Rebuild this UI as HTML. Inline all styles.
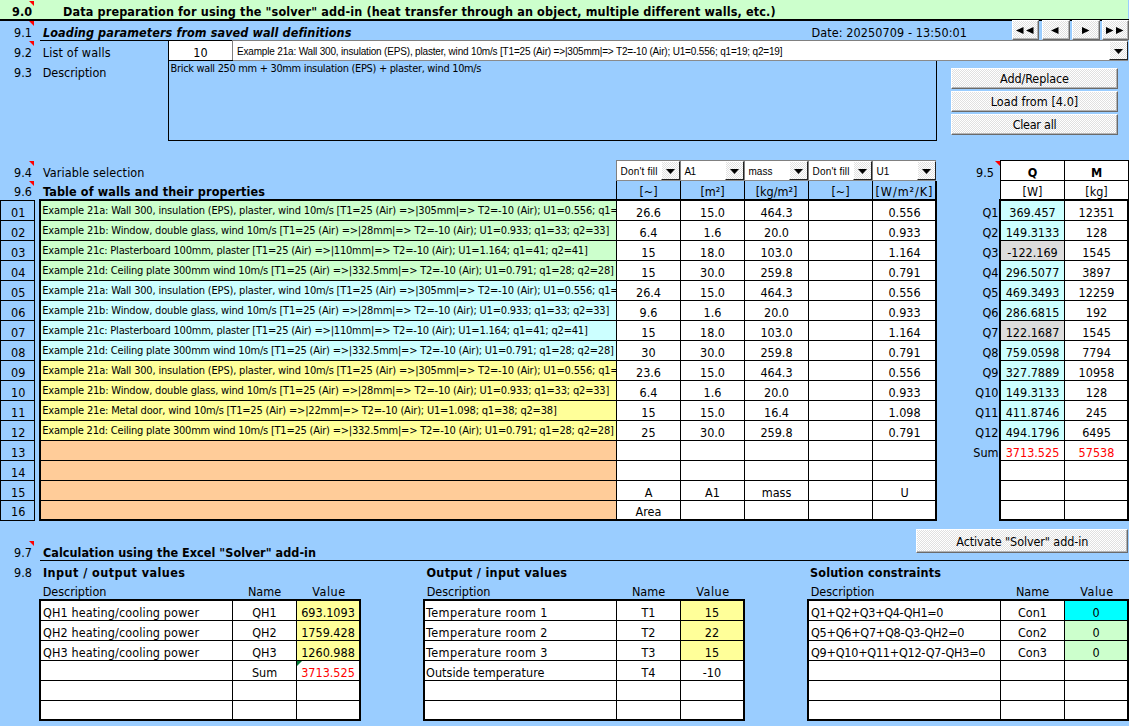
<!DOCTYPE html>
<html lang="en"><head><meta charset="utf-8"><title>Solver data preparation</title>
<style>
html,body{margin:0;padding:0}
body{width:1129px;height:726px;overflow:hidden;background:#9ACDFF;position:relative;font-family:"DejaVu Sans Condensed","Liberation Sans",sans-serif;}
div,span.t,svg{position:absolute;display:block}
.t{white-space:pre;line-height:20px;height:20px}
.clip{overflow:hidden;background:none}
.btn{background:#fff repeating-conic-gradient(#fff 0 25%,#e0e0e0 0 50%) 0 0/2px 2px;box-sizing:border-box;border-top:1px solid #fff;border-left:1px solid #fff;border-right:1px solid #6a6a6a;border-bottom:1px solid #6a6a6a;box-shadow:inset -1px -1px 0 #b4b4b4}
.cb{border-right-color:#222;border-bottom-color:#222;box-shadow:none}
.combo{background:#fff;box-sizing:border-box;border-top:1px solid #808080;border-left:1px solid #808080;border-right:0;border-bottom:1px solid #8a8a8a}
</style></head>
<body>
<div style="left:0px;top:0px;width:1128px;height:19px;background:#CCFFCC;"></div>
<div style="left:0px;top:19px;width:1129px;height:2px;background:#000;"></div>
<div style="left:40px;top:40px;width:193px;height:1px;background:#000;"></div>
<div style="left:40px;top:190px;width:1089px;height:0px;background:#000;"></div>
<div style="left:29px;top:1px;width:0;height:0;border-top:5px solid #FF0000;border-left:5px solid transparent;background:none"></div>
<div style="left:29px;top:21px;width:0;height:0;border-top:5px solid #FF0000;border-left:5px solid transparent;background:none"></div>
<div style="left:29px;top:41px;width:0;height:0;border-top:5px solid #FF0000;border-left:5px solid transparent;background:none"></div>
<div style="left:29px;top:161px;width:0;height:0;border-top:5px solid #FF0000;border-left:5px solid transparent;background:none"></div>
<div style="left:29px;top:181px;width:0;height:0;border-top:5px solid #FF0000;border-left:5px solid transparent;background:none"></div>
<div style="left:29px;top:541px;width:0;height:0;border-top:5px solid #FF0000;border-left:5px solid transparent;background:none"></div>
<div style="left:995px;top:161px;width:0;height:0;border-top:5px solid #FF0000;border-left:5px solid transparent;background:none"></div>
<span class="t " style="font-size:12.5px;color:#000;font-weight:bold;left:-268px;width:300px;text-align:right;top:1.68px;">9.0</span>
<span class="t " style="font-size:12.5px;color:#000;left:-268px;width:300px;text-align:right;top:22.68px;">9.1</span>
<span class="t " style="font-size:12.5px;color:#000;left:-268px;width:300px;text-align:right;top:42.67px;">9.2</span>
<span class="t " style="font-size:12.5px;color:#000;left:-268px;width:300px;text-align:right;top:62.67px;">9.3</span>
<span class="t " style="font-size:12.5px;color:#000;left:-268px;width:300px;text-align:right;top:162.68px;">9.4</span>
<span class="t " style="font-size:12.5px;color:#000;left:-268px;width:300px;text-align:right;top:181.68px;">9.6</span>
<span class="t " style="font-size:12.5px;color:#000;left:-268px;width:300px;text-align:right;top:542.67px;">9.7</span>
<span class="t " style="font-size:12.5px;color:#000;left:-268px;width:300px;text-align:right;top:562.67px;">9.8</span>
<span class="t " style="font-size:12.5px;color:#000;font-weight:bold;letter-spacing:0.142px;left:63px;top:1.68px;">Data preparation for using the "solver" add-in (heat transfer through an object, multiple different walls, etc.)</span>
<span class="t " style="font-size:12.5px;color:#000;font-weight:bold;font-style:italic;letter-spacing:0.094px;left:43px;top:22.68px;">Loading parameters from saved wall definitions</span>
<span class="t " style="font-size:12.5px;color:#000;letter-spacing:0.181px;left:42.7px;top:42.67px;">List of walls</span>
<span class="t " style="font-size:12.5px;color:#000;letter-spacing:-0.036px;left:42.7px;top:62.67px;">Description</span>
<span class="t " style="font-size:12.5px;color:#000;letter-spacing:0.114px;left:43px;top:162.68px;">Variable selection</span>
<span class="t " style="font-size:12.5px;color:#000;font-weight:bold;letter-spacing:0.120px;left:43px;top:181.68px;">Table of walls and their properties</span>
<span class="t " style="font-size:12.5px;color:#000;font-weight:bold;letter-spacing:0.044px;left:43px;top:542.67px;">Calculation using the Excel "Solver" add-in</span>
<span class="t " style="font-size:12.5px;color:#000;font-weight:bold;letter-spacing:0.444px;left:43px;top:562.67px;">Input / output values</span>
<span class="t " style="font-size:12.5px;color:#000;font-weight:bold;letter-spacing:0.294px;left:426.5px;top:562.67px;">Output / input values</span>
<span class="t " style="font-size:12.5px;color:#000;font-weight:bold;letter-spacing:0.152px;left:810px;top:562.67px;">Solution constraints</span>
<span class="t " style="font-size:12.5px;color:#000;letter-spacing:0.097px;left:811.5px;top:22.68px;">Date: 20250709 - 13:50:01</span>
<div class="btn" style="left:1012px;top:20px;width:27px;height:20px"></div>
<div class="btn" style="left:1042px;top:20px;width:28px;height:20px"></div>
<div class="btn" style="left:1072px;top:20px;width:28px;height:20px"></div>
<div class="btn" style="left:1102px;top:20px;width:27px;height:20px"></div>
<svg style="left:1015.6px;top:27px" width="8" height="7" viewBox="0 0 8 7"><polygon points="7.5,0 7.5,7 0,3.5" fill="#000"/></svg>
<svg style="left:1026.4px;top:27px" width="8" height="7" viewBox="0 0 8 7"><polygon points="7.5,0 7.5,7 0,3.5" fill="#000"/></svg>
<svg style="left:1050.7px;top:27px" width="8" height="7" viewBox="0 0 8 7"><polygon points="7.5,0 7.5,7 0,3.5" fill="#000"/></svg>
<svg style="left:1081.75px;top:27px" width="8" height="7" viewBox="0 0 8 7"><polygon points="0,0 0,7 7.5,3.5" fill="#000"/></svg>
<svg style="left:1106.1px;top:27px" width="8" height="7" viewBox="0 0 8 7"><polygon points="0,0 0,7 7.5,3.5" fill="#000"/></svg>
<svg style="left:1116.1px;top:27px" width="8" height="7" viewBox="0 0 8 7"><polygon points="0,0 0,7 7.5,3.5" fill="#000"/></svg>
<div style="left:169px;top:41px;width:63px;height:19px;background:#fff;"></div>
<span class="t " style="font-size:12.5px;color:#000;left:50.5px;width:300px;text-align:center;top:42.67px;">10</span>
<div class="combo" style="left:232px;top:40px;width:896px;height:21px"></div>
<div class="btn cb" style="left:1109px;top:41px;width:19px;height:19px"></div>
<svg style="left:1114px;top:49px" width="9" height="5" viewBox="0 0 9 5"><polygon points="0,0 9,0 4.5,5" fill="#000"/></svg>
<span class="t " style="font-size:10px;color:#000;font-family:'Liberation Sans',sans-serif;letter-spacing:-0.175px;left:237px;top:42.03px;">Example 21a: Wall 300, insulation (EPS), plaster, wind 10m/s [T1=25 (Air) =&gt;|305mm|=&gt; T2=-10 (Air); U1=0.556; q1=19; q2=19]</span>
<div style="left:168px;top:41px;width:1px;height:100px;background:#000;"></div>
<div style="left:168px;top:60px;width:65px;height:1px;background:#000;"></div>
<div style="left:168px;top:140px;width:769px;height:1px;background:#000;"></div>
<div style="left:936px;top:61px;width:1px;height:80px;background:#000;"></div>
<span class="t " style="font-size:10.9px;color:#000;letter-spacing:-0.280px;left:170.5px;top:59.23px;">Brick wall 250 mm + 30mm insulation (EPS) + plaster, wind 10m/s</span>
<div class="btn" style="left:951px;top:68px;width:167px;height:21px"></div>
<span class="t " style="font-size:12.5px;color:#000;letter-spacing:-0.098px;left:884.5px;width:300px;text-align:center;top:68.67px;">Add/Replace</span>
<div class="btn" style="left:951px;top:91px;width:167px;height:21px"></div>
<span class="t " style="font-size:12.5px;color:#000;letter-spacing:0.044px;left:884.5px;width:300px;text-align:center;top:91.67px;">Load from [4.0]</span>
<div class="btn" style="left:951px;top:114px;width:167px;height:21px"></div>
<span class="t " style="font-size:12.5px;color:#000;letter-spacing:-0.266px;left:884.5px;width:300px;text-align:center;top:114.67px;">Clear all</span>
<div class="btn" style="left:916px;top:529px;width:212px;height:24px"></div>
<span class="t " style="font-size:12.5px;color:#000;letter-spacing:-0.103px;left:872.3px;width:300px;text-align:center;top:532.17px;">Activate "Solver" add-in</span>
<span class="t " style="font-size:12.5px;color:#000;left:-131.8px;width:300px;text-align:center;top:202.68px;">01</span>
<span class="t " style="font-size:12.5px;color:#000;left:-131.8px;width:300px;text-align:center;top:222.68px;">02</span>
<span class="t " style="font-size:12.5px;color:#000;left:-131.8px;width:300px;text-align:center;top:242.68px;">03</span>
<span class="t " style="font-size:12.5px;color:#000;left:-131.8px;width:300px;text-align:center;top:262.68px;">04</span>
<span class="t " style="font-size:12.5px;color:#000;left:-131.8px;width:300px;text-align:center;top:282.68px;">05</span>
<span class="t " style="font-size:12.5px;color:#000;left:-131.8px;width:300px;text-align:center;top:302.68px;">06</span>
<span class="t " style="font-size:12.5px;color:#000;left:-131.8px;width:300px;text-align:center;top:322.68px;">07</span>
<span class="t " style="font-size:12.5px;color:#000;left:-131.8px;width:300px;text-align:center;top:342.68px;">08</span>
<span class="t " style="font-size:12.5px;color:#000;left:-131.8px;width:300px;text-align:center;top:362.68px;">09</span>
<span class="t " style="font-size:12.5px;color:#000;left:-131.8px;width:300px;text-align:center;top:382.68px;">10</span>
<span class="t " style="font-size:12.5px;color:#000;left:-131.8px;width:300px;text-align:center;top:402.68px;">11</span>
<span class="t " style="font-size:12.5px;color:#000;left:-131.8px;width:300px;text-align:center;top:422.68px;">12</span>
<span class="t " style="font-size:12.5px;color:#000;left:-131.8px;width:300px;text-align:center;top:442.68px;">13</span>
<span class="t " style="font-size:12.5px;color:#000;left:-131.8px;width:300px;text-align:center;top:462.68px;">14</span>
<span class="t " style="font-size:12.5px;color:#000;left:-131.8px;width:300px;text-align:center;top:482.68px;">15</span>
<span class="t " style="font-size:12.5px;color:#000;left:-131.8px;width:300px;text-align:center;top:501.68px;">16</span>
<div style="left:0px;top:200px;width:1px;height:321px;background:#000;"></div>
<div style="left:34px;top:200px;width:1px;height:321px;background:#000;"></div>
<div style="left:0px;top:200px;width:35px;height:1px;background:#000;"></div>
<div style="left:0px;top:220px;width:35px;height:1px;background:#000;"></div>
<div style="left:0px;top:240px;width:35px;height:1px;background:#000;"></div>
<div style="left:0px;top:260px;width:35px;height:1px;background:#000;"></div>
<div style="left:0px;top:280px;width:35px;height:1px;background:#000;"></div>
<div style="left:0px;top:300px;width:35px;height:1px;background:#000;"></div>
<div style="left:0px;top:320px;width:35px;height:1px;background:#000;"></div>
<div style="left:0px;top:340px;width:35px;height:1px;background:#000;"></div>
<div style="left:0px;top:360px;width:35px;height:1px;background:#000;"></div>
<div style="left:0px;top:380px;width:35px;height:1px;background:#000;"></div>
<div style="left:0px;top:400px;width:35px;height:1px;background:#000;"></div>
<div style="left:0px;top:420px;width:35px;height:1px;background:#000;"></div>
<div style="left:0px;top:440px;width:35px;height:1px;background:#000;"></div>
<div style="left:0px;top:460px;width:35px;height:1px;background:#000;"></div>
<div style="left:0px;top:480px;width:35px;height:1px;background:#000;"></div>
<div style="left:0px;top:500px;width:35px;height:1px;background:#000;"></div>
<div style="left:0px;top:520px;width:35px;height:1px;background:#000;"></div>
<div style="left:41px;top:201px;width:575px;height:19px;background:#CCFFCC;"></div>
<div style="left:617px;top:201px;width:318px;height:19px;background:#fff;"></div>
<div style="left:41px;top:221px;width:575px;height:19px;background:#CCFFCC;"></div>
<div style="left:617px;top:221px;width:318px;height:19px;background:#fff;"></div>
<div style="left:41px;top:241px;width:575px;height:19px;background:#CCFFCC;"></div>
<div style="left:617px;top:241px;width:318px;height:19px;background:#fff;"></div>
<div style="left:41px;top:261px;width:575px;height:19px;background:#CCFFCC;"></div>
<div style="left:617px;top:261px;width:318px;height:19px;background:#fff;"></div>
<div style="left:41px;top:281px;width:575px;height:19px;background:#CCFFFF;"></div>
<div style="left:617px;top:281px;width:318px;height:19px;background:#fff;"></div>
<div style="left:41px;top:301px;width:575px;height:19px;background:#CCFFFF;"></div>
<div style="left:617px;top:301px;width:318px;height:19px;background:#fff;"></div>
<div style="left:41px;top:321px;width:575px;height:19px;background:#CCFFFF;"></div>
<div style="left:617px;top:321px;width:318px;height:19px;background:#fff;"></div>
<div style="left:41px;top:341px;width:575px;height:19px;background:#CCFFFF;"></div>
<div style="left:617px;top:341px;width:318px;height:19px;background:#fff;"></div>
<div style="left:41px;top:361px;width:575px;height:19px;background:#FFFF99;"></div>
<div style="left:617px;top:361px;width:318px;height:19px;background:#fff;"></div>
<div style="left:41px;top:381px;width:575px;height:19px;background:#FFFF99;"></div>
<div style="left:617px;top:381px;width:318px;height:19px;background:#fff;"></div>
<div style="left:41px;top:401px;width:575px;height:19px;background:#FFFF99;"></div>
<div style="left:617px;top:401px;width:318px;height:19px;background:#fff;"></div>
<div style="left:41px;top:421px;width:575px;height:19px;background:#FFFF99;"></div>
<div style="left:617px;top:421px;width:318px;height:19px;background:#fff;"></div>
<div style="left:41px;top:441px;width:575px;height:19px;background:#FFCC99;"></div>
<div style="left:617px;top:441px;width:318px;height:19px;background:#fff;"></div>
<div style="left:41px;top:461px;width:575px;height:19px;background:#FFCC99;"></div>
<div style="left:617px;top:461px;width:318px;height:19px;background:#fff;"></div>
<div style="left:41px;top:481px;width:575px;height:19px;background:#FFCC99;"></div>
<div style="left:617px;top:481px;width:318px;height:19px;background:#fff;"></div>
<div style="left:41px;top:501px;width:575px;height:19px;background:#FFCC99;"></div>
<div style="left:617px;top:501px;width:318px;height:19px;background:#fff;"></div>
<div class="combo" style="left:616px;top:160px;width:64px;height:21px"></div>
<div class="btn cb" style="left:661px;top:161px;width:19px;height:19px"></div>
<svg style="left:666px;top:169px" width="9" height="5" viewBox="0 0 9 5"><polygon points="0,0 9,0 4.5,5" fill="#000"/></svg>
<span class="t " style="font-size:10px;color:#000;font-family:'Liberation Sans',sans-serif;letter-spacing:0.193px;left:620.5px;top:162.03px;">Don't fill</span>
<span class="t " style="font-size:12.5px;color:#000;left:498.5px;width:300px;text-align:center;top:181.68px;">[~]</span>
<div class="combo" style="left:680px;top:160px;width:64px;height:21px"></div>
<div class="btn cb" style="left:725px;top:161px;width:19px;height:19px"></div>
<svg style="left:730px;top:169px" width="9" height="5" viewBox="0 0 9 5"><polygon points="0,0 9,0 4.5,5" fill="#000"/></svg>
<span class="t " style="font-size:10px;color:#000;font-family:'Liberation Sans',sans-serif;letter-spacing:-0.734px;left:684.5px;top:162.03px;">A1</span>
<span class="t " style="font-size:12.5px;color:#000;left:562.5px;width:300px;text-align:center;top:181.68px;">[m²]</span>
<div class="combo" style="left:744px;top:160px;width:64px;height:21px"></div>
<div class="btn cb" style="left:789px;top:161px;width:19px;height:19px"></div>
<svg style="left:794px;top:169px" width="9" height="5" viewBox="0 0 9 5"><polygon points="0,0 9,0 4.5,5" fill="#000"/></svg>
<span class="t " style="font-size:10px;color:#000;font-family:'Liberation Sans',sans-serif;left:748.5px;top:162.03px;">mass</span>
<span class="t " style="font-size:12.5px;color:#000;left:626.5px;width:300px;text-align:center;top:181.68px;">[kg/m²]</span>
<div class="combo" style="left:808px;top:160px;width:64px;height:21px"></div>
<div class="btn cb" style="left:853px;top:161px;width:19px;height:19px"></div>
<svg style="left:858px;top:169px" width="9" height="5" viewBox="0 0 9 5"><polygon points="0,0 9,0 4.5,5" fill="#000"/></svg>
<span class="t " style="font-size:10px;color:#000;font-family:'Liberation Sans',sans-serif;letter-spacing:0.193px;left:812.5px;top:162.03px;">Don't fill</span>
<span class="t " style="font-size:12.5px;color:#000;left:690.5px;width:300px;text-align:center;top:181.68px;">[~]</span>
<div class="combo" style="left:872px;top:160px;width:64px;height:21px"></div>
<div class="btn cb" style="left:917px;top:161px;width:19px;height:19px"></div>
<svg style="left:922px;top:169px" width="9" height="5" viewBox="0 0 9 5"><polygon points="0,0 9,0 4.5,5" fill="#000"/></svg>
<span class="t " style="font-size:10px;color:#000;font-family:'Liberation Sans',sans-serif;left:876.5px;top:162.03px;">U1</span>
<span class="t " style="font-size:12.5px;color:#000;letter-spacing:0.955px;left:754.5px;width:300px;text-align:center;top:181.68px;">[W/m²/K]</span>
<div style="left:616px;top:181px;width:1px;height:18px;background:#000;"></div>
<div style="left:680px;top:181px;width:1px;height:340px;background:#000;"></div>
<div style="left:744px;top:181px;width:1px;height:340px;background:#000;"></div>
<div style="left:808px;top:181px;width:1px;height:340px;background:#000;"></div>
<div style="left:872px;top:181px;width:1px;height:340px;background:#000;"></div>
<div style="left:616px;top:199px;width:1px;height:322px;background:#000;"></div>
<div style="left:935px;top:181px;width:2px;height:340px;background:#000;"></div>
<div style="left:39px;top:199px;width:898px;height:2px;background:#000;"></div>
<div style="left:39px;top:519px;width:898px;height:2px;background:#000;"></div>
<div style="left:39px;top:199px;width:2px;height:322px;background:#000;"></div>
<div style="left:41px;top:220px;width:894px;height:1px;background:#000;"></div>
<div style="left:41px;top:240px;width:894px;height:1px;background:#000;"></div>
<div style="left:41px;top:260px;width:894px;height:1px;background:#000;"></div>
<div style="left:41px;top:280px;width:894px;height:1px;background:#000;"></div>
<div style="left:41px;top:300px;width:894px;height:1px;background:#000;"></div>
<div style="left:41px;top:320px;width:894px;height:1px;background:#000;"></div>
<div style="left:41px;top:340px;width:894px;height:1px;background:#000;"></div>
<div style="left:41px;top:360px;width:894px;height:1px;background:#000;"></div>
<div style="left:41px;top:380px;width:894px;height:1px;background:#000;"></div>
<div style="left:41px;top:400px;width:894px;height:1px;background:#000;"></div>
<div style="left:41px;top:420px;width:894px;height:1px;background:#000;"></div>
<div style="left:41px;top:440px;width:894px;height:1px;background:#000;"></div>
<div style="left:41px;top:460px;width:894px;height:1px;background:#000;"></div>
<div style="left:41px;top:480px;width:894px;height:1px;background:#000;"></div>
<div style="left:41px;top:500px;width:894px;height:1px;background:#000;"></div>
<div class="clip" style="left:41px;top:201px;width:575px;height:19px">
<span class="t " style="font-size:11px;color:#000;letter-spacing:-0.176px;left:1.2999999999999972px;top:0.19px;">Example 21a: Wall 300, insulation (EPS), plaster, wind 10m/s [T1=25 (Air) =&gt;|305mm|=&gt; T2=-10 (Air); U1=0.556; q1=19; q2=19]</span>
</div>
<span class="t " style="font-size:12.5px;color:#000;left:498.5px;width:300px;text-align:center;top:202.68px;">26.6</span>
<span class="t " style="font-size:12.5px;color:#000;left:562.5px;width:300px;text-align:center;top:202.68px;">15.0</span>
<span class="t " style="font-size:12.5px;color:#000;left:626.5px;width:300px;text-align:center;top:202.68px;">464.3</span>
<span class="t " style="font-size:12.5px;color:#000;left:754.5px;width:300px;text-align:center;top:202.68px;">0.556</span>
<div class="clip" style="left:41px;top:221px;width:575px;height:19px">
<span class="t " style="font-size:11px;color:#000;letter-spacing:-0.187px;left:1.2999999999999972px;top:0.19px;">Example 21b: Window, double glass, wind 10m/s [T1=25 (Air) =&gt;|28mm|=&gt; T2=-10 (Air); U1=0.933; q1=33; q2=33]</span>
</div>
<span class="t " style="font-size:12.5px;color:#000;left:498.5px;width:300px;text-align:center;top:222.68px;">6.4</span>
<span class="t " style="font-size:12.5px;color:#000;left:562.5px;width:300px;text-align:center;top:222.68px;">1.6</span>
<span class="t " style="font-size:12.5px;color:#000;left:626.5px;width:300px;text-align:center;top:222.68px;">20.0</span>
<span class="t " style="font-size:12.5px;color:#000;left:754.5px;width:300px;text-align:center;top:222.68px;">0.933</span>
<div class="clip" style="left:41px;top:241px;width:575px;height:19px">
<span class="t " style="font-size:11px;color:#000;letter-spacing:-0.197px;left:1.2999999999999972px;top:0.19px;">Example 21c: Plasterboard 100mm, plaster [T1=25 (Air) =&gt;|110mm|=&gt; T2=-10 (Air); U1=1.164; q1=41; q2=41]</span>
</div>
<span class="t " style="font-size:12.5px;color:#000;left:498.5px;width:300px;text-align:center;top:242.68px;">15</span>
<span class="t " style="font-size:12.5px;color:#000;left:562.5px;width:300px;text-align:center;top:242.68px;">18.0</span>
<span class="t " style="font-size:12.5px;color:#000;left:626.5px;width:300px;text-align:center;top:242.68px;">103.0</span>
<span class="t " style="font-size:12.5px;color:#000;left:754.5px;width:300px;text-align:center;top:242.68px;">1.164</span>
<div class="clip" style="left:41px;top:261px;width:575px;height:19px">
<span class="t " style="font-size:11px;color:#000;letter-spacing:-0.221px;left:1.2999999999999972px;top:0.19px;">Example 21d: Ceiling plate 300mm wind 10m/s [T1=25 (Air) =&gt;|332.5mm|=&gt; T2=-10 (Air); U1=0.791; q1=28; q2=28]</span>
</div>
<span class="t " style="font-size:12.5px;color:#000;left:498.5px;width:300px;text-align:center;top:262.68px;">15</span>
<span class="t " style="font-size:12.5px;color:#000;left:562.5px;width:300px;text-align:center;top:262.68px;">30.0</span>
<span class="t " style="font-size:12.5px;color:#000;left:626.5px;width:300px;text-align:center;top:262.68px;">259.8</span>
<span class="t " style="font-size:12.5px;color:#000;left:754.5px;width:300px;text-align:center;top:262.68px;">0.791</span>
<div class="clip" style="left:41px;top:281px;width:575px;height:19px">
<span class="t " style="font-size:11px;color:#000;letter-spacing:-0.176px;left:1.2999999999999972px;top:0.19px;">Example 21a: Wall 300, insulation (EPS), plaster, wind 10m/s [T1=25 (Air) =&gt;|305mm|=&gt; T2=-10 (Air); U1=0.556; q1=19; q2=19]</span>
</div>
<span class="t " style="font-size:12.5px;color:#000;left:498.5px;width:300px;text-align:center;top:282.68px;">26.4</span>
<span class="t " style="font-size:12.5px;color:#000;left:562.5px;width:300px;text-align:center;top:282.68px;">15.0</span>
<span class="t " style="font-size:12.5px;color:#000;left:626.5px;width:300px;text-align:center;top:282.68px;">464.3</span>
<span class="t " style="font-size:12.5px;color:#000;left:754.5px;width:300px;text-align:center;top:282.68px;">0.556</span>
<div class="clip" style="left:41px;top:301px;width:575px;height:19px">
<span class="t " style="font-size:11px;color:#000;letter-spacing:-0.187px;left:1.2999999999999972px;top:0.19px;">Example 21b: Window, double glass, wind 10m/s [T1=25 (Air) =&gt;|28mm|=&gt; T2=-10 (Air); U1=0.933; q1=33; q2=33]</span>
</div>
<span class="t " style="font-size:12.5px;color:#000;left:498.5px;width:300px;text-align:center;top:302.68px;">9.6</span>
<span class="t " style="font-size:12.5px;color:#000;left:562.5px;width:300px;text-align:center;top:302.68px;">1.6</span>
<span class="t " style="font-size:12.5px;color:#000;left:626.5px;width:300px;text-align:center;top:302.68px;">20.0</span>
<span class="t " style="font-size:12.5px;color:#000;left:754.5px;width:300px;text-align:center;top:302.68px;">0.933</span>
<div class="clip" style="left:41px;top:321px;width:575px;height:19px">
<span class="t " style="font-size:11px;color:#000;letter-spacing:-0.197px;left:1.2999999999999972px;top:0.19px;">Example 21c: Plasterboard 100mm, plaster [T1=25 (Air) =&gt;|110mm|=&gt; T2=-10 (Air); U1=1.164; q1=41; q2=41]</span>
</div>
<span class="t " style="font-size:12.5px;color:#000;left:498.5px;width:300px;text-align:center;top:322.68px;">15</span>
<span class="t " style="font-size:12.5px;color:#000;left:562.5px;width:300px;text-align:center;top:322.68px;">18.0</span>
<span class="t " style="font-size:12.5px;color:#000;left:626.5px;width:300px;text-align:center;top:322.68px;">103.0</span>
<span class="t " style="font-size:12.5px;color:#000;left:754.5px;width:300px;text-align:center;top:322.68px;">1.164</span>
<div class="clip" style="left:41px;top:341px;width:575px;height:19px">
<span class="t " style="font-size:11px;color:#000;letter-spacing:-0.221px;left:1.2999999999999972px;top:0.19px;">Example 21d: Ceiling plate 300mm wind 10m/s [T1=25 (Air) =&gt;|332.5mm|=&gt; T2=-10 (Air); U1=0.791; q1=28; q2=28]</span>
</div>
<span class="t " style="font-size:12.5px;color:#000;left:498.5px;width:300px;text-align:center;top:342.68px;">30</span>
<span class="t " style="font-size:12.5px;color:#000;left:562.5px;width:300px;text-align:center;top:342.68px;">30.0</span>
<span class="t " style="font-size:12.5px;color:#000;left:626.5px;width:300px;text-align:center;top:342.68px;">259.8</span>
<span class="t " style="font-size:12.5px;color:#000;left:754.5px;width:300px;text-align:center;top:342.68px;">0.791</span>
<div class="clip" style="left:41px;top:361px;width:575px;height:19px">
<span class="t " style="font-size:11px;color:#000;letter-spacing:-0.176px;left:1.2999999999999972px;top:0.19px;">Example 21a: Wall 300, insulation (EPS), plaster, wind 10m/s [T1=25 (Air) =&gt;|305mm|=&gt; T2=-10 (Air); U1=0.556; q1=19; q2=19]</span>
</div>
<span class="t " style="font-size:12.5px;color:#000;left:498.5px;width:300px;text-align:center;top:362.68px;">23.6</span>
<span class="t " style="font-size:12.5px;color:#000;left:562.5px;width:300px;text-align:center;top:362.68px;">15.0</span>
<span class="t " style="font-size:12.5px;color:#000;left:626.5px;width:300px;text-align:center;top:362.68px;">464.3</span>
<span class="t " style="font-size:12.5px;color:#000;left:754.5px;width:300px;text-align:center;top:362.68px;">0.556</span>
<div class="clip" style="left:41px;top:381px;width:575px;height:19px">
<span class="t " style="font-size:11px;color:#000;letter-spacing:-0.187px;left:1.2999999999999972px;top:0.19px;">Example 21b: Window, double glass, wind 10m/s [T1=25 (Air) =&gt;|28mm|=&gt; T2=-10 (Air); U1=0.933; q1=33; q2=33]</span>
</div>
<span class="t " style="font-size:12.5px;color:#000;left:498.5px;width:300px;text-align:center;top:382.68px;">6.4</span>
<span class="t " style="font-size:12.5px;color:#000;left:562.5px;width:300px;text-align:center;top:382.68px;">1.6</span>
<span class="t " style="font-size:12.5px;color:#000;left:626.5px;width:300px;text-align:center;top:382.68px;">20.0</span>
<span class="t " style="font-size:12.5px;color:#000;left:754.5px;width:300px;text-align:center;top:382.68px;">0.933</span>
<div class="clip" style="left:41px;top:401px;width:575px;height:19px">
<span class="t " style="font-size:11px;color:#000;letter-spacing:-0.182px;left:1.2999999999999972px;top:0.19px;">Example 21e: Metal door, wind 10m/s [T1=25 (Air) =&gt;|22mm|=&gt; T2=-10 (Air); U1=1.098; q1=38; q2=38]</span>
</div>
<span class="t " style="font-size:12.5px;color:#000;left:498.5px;width:300px;text-align:center;top:402.68px;">15</span>
<span class="t " style="font-size:12.5px;color:#000;left:562.5px;width:300px;text-align:center;top:402.68px;">15.0</span>
<span class="t " style="font-size:12.5px;color:#000;left:626.5px;width:300px;text-align:center;top:402.68px;">16.4</span>
<span class="t " style="font-size:12.5px;color:#000;left:754.5px;width:300px;text-align:center;top:402.68px;">1.098</span>
<div class="clip" style="left:41px;top:421px;width:575px;height:19px">
<span class="t " style="font-size:11px;color:#000;letter-spacing:-0.221px;left:1.2999999999999972px;top:0.19px;">Example 21d: Ceiling plate 300mm wind 10m/s [T1=25 (Air) =&gt;|332.5mm|=&gt; T2=-10 (Air); U1=0.791; q1=28; q2=28]</span>
</div>
<span class="t " style="font-size:12.5px;color:#000;left:498.5px;width:300px;text-align:center;top:422.68px;">25</span>
<span class="t " style="font-size:12.5px;color:#000;left:562.5px;width:300px;text-align:center;top:422.68px;">30.0</span>
<span class="t " style="font-size:12.5px;color:#000;left:626.5px;width:300px;text-align:center;top:422.68px;">259.8</span>
<span class="t " style="font-size:12.5px;color:#000;left:754.5px;width:300px;text-align:center;top:422.68px;">0.791</span>
<span class="t " style="font-size:12.5px;color:#000;left:498.5px;width:300px;text-align:center;top:482.68px;">A</span>
<span class="t " style="font-size:12.5px;color:#000;left:562.5px;width:300px;text-align:center;top:482.68px;">A1</span>
<span class="t " style="font-size:12.5px;color:#000;left:626.5px;width:300px;text-align:center;top:482.68px;">mass</span>
<span class="t " style="font-size:12.5px;color:#000;left:754.5px;width:300px;text-align:center;top:482.68px;">U</span>
<span class="t " style="font-size:12.5px;color:#000;left:498.5px;width:300px;text-align:center;top:501.68px;">Area</span>
<div style="left:1001px;top:161px;width:127px;height:38px;background:#fff;"></div>
<div style="left:1001px;top:201px;width:63px;height:19px;background:#CCFFFF;"></div>
<div style="left:1065px;top:201px;width:62px;height:19px;background:#fff;"></div>
<div style="left:1001px;top:221px;width:63px;height:19px;background:#CCFFFF;"></div>
<div style="left:1065px;top:221px;width:62px;height:19px;background:#fff;"></div>
<div style="left:1001px;top:241px;width:63px;height:19px;background:#DDDDDD;"></div>
<div style="left:1065px;top:241px;width:62px;height:19px;background:#fff;"></div>
<div style="left:1001px;top:261px;width:63px;height:19px;background:#CCFFFF;"></div>
<div style="left:1065px;top:261px;width:62px;height:19px;background:#fff;"></div>
<div style="left:1001px;top:281px;width:63px;height:19px;background:#CCFFFF;"></div>
<div style="left:1065px;top:281px;width:62px;height:19px;background:#fff;"></div>
<div style="left:1001px;top:301px;width:63px;height:19px;background:#CCFFFF;"></div>
<div style="left:1065px;top:301px;width:62px;height:19px;background:#fff;"></div>
<div style="left:1001px;top:321px;width:63px;height:19px;background:#DDDDDD;"></div>
<div style="left:1065px;top:321px;width:62px;height:19px;background:#fff;"></div>
<div style="left:1001px;top:341px;width:63px;height:19px;background:#CCFFFF;"></div>
<div style="left:1065px;top:341px;width:62px;height:19px;background:#fff;"></div>
<div style="left:1001px;top:361px;width:63px;height:19px;background:#CCFFFF;"></div>
<div style="left:1065px;top:361px;width:62px;height:19px;background:#fff;"></div>
<div style="left:1001px;top:381px;width:63px;height:19px;background:#CCFFFF;"></div>
<div style="left:1065px;top:381px;width:62px;height:19px;background:#fff;"></div>
<div style="left:1001px;top:401px;width:63px;height:19px;background:#CCFFFF;"></div>
<div style="left:1065px;top:401px;width:62px;height:19px;background:#fff;"></div>
<div style="left:1001px;top:421px;width:63px;height:19px;background:#CCFFFF;"></div>
<div style="left:1065px;top:421px;width:62px;height:19px;background:#fff;"></div>
<div style="left:1001px;top:441px;width:63px;height:19px;background:#fff;"></div>
<div style="left:1065px;top:441px;width:62px;height:19px;background:#fff;"></div>
<div style="left:1001px;top:461px;width:63px;height:19px;background:#fff;"></div>
<div style="left:1065px;top:461px;width:62px;height:19px;background:#fff;"></div>
<div style="left:1001px;top:481px;width:63px;height:19px;background:#fff;"></div>
<div style="left:1065px;top:481px;width:62px;height:19px;background:#fff;"></div>
<div style="left:1001px;top:501px;width:63px;height:19px;background:#fff;"></div>
<div style="left:1065px;top:501px;width:62px;height:19px;background:#fff;"></div>
<div style="left:1000px;top:160px;width:129px;height:1px;background:#000;"></div>
<div style="left:1000px;top:180px;width:129px;height:1px;background:#000;"></div>
<div style="left:1000px;top:160px;width:1px;height:39px;background:#000;"></div>
<div style="left:1128px;top:160px;width:1px;height:39px;background:#000;"></div>
<div style="left:1064px;top:160px;width:1px;height:361px;background:#000;"></div>
<div style="left:999px;top:199px;width:130px;height:2px;background:#000;"></div>
<div style="left:999px;top:519px;width:130px;height:2px;background:#000;"></div>
<div style="left:999px;top:199px;width:2px;height:322px;background:#000;"></div>
<div style="left:1127px;top:199px;width:2px;height:322px;background:#000;"></div>
<div style="left:1001px;top:220px;width:126px;height:1px;background:#000;"></div>
<div style="left:1001px;top:240px;width:126px;height:1px;background:#000;"></div>
<div style="left:1001px;top:260px;width:126px;height:1px;background:#000;"></div>
<div style="left:1001px;top:280px;width:126px;height:1px;background:#000;"></div>
<div style="left:1001px;top:300px;width:126px;height:1px;background:#000;"></div>
<div style="left:1001px;top:320px;width:126px;height:1px;background:#000;"></div>
<div style="left:1001px;top:340px;width:126px;height:1px;background:#000;"></div>
<div style="left:1001px;top:360px;width:126px;height:1px;background:#000;"></div>
<div style="left:1001px;top:380px;width:126px;height:1px;background:#000;"></div>
<div style="left:1001px;top:400px;width:126px;height:1px;background:#000;"></div>
<div style="left:1001px;top:420px;width:126px;height:1px;background:#000;"></div>
<div style="left:1001px;top:440px;width:126px;height:1px;background:#000;"></div>
<div style="left:1001px;top:460px;width:126px;height:1px;background:#000;"></div>
<div style="left:1001px;top:480px;width:126px;height:1px;background:#000;"></div>
<div style="left:1001px;top:500px;width:126px;height:1px;background:#000;"></div>
<span class="t " style="font-size:12.5px;color:#000;left:694px;width:300px;text-align:right;top:162.68px;">9.5</span>
<span class="t " style="font-size:12.5px;color:#000;font-weight:bold;left:882.5px;width:300px;text-align:center;top:162.68px;">Q</span>
<span class="t " style="font-size:12.5px;color:#000;font-weight:bold;left:946.5px;width:300px;text-align:center;top:162.68px;">M</span>
<span class="t " style="font-size:12.5px;color:#000;left:882.5px;width:300px;text-align:center;top:181.68px;">[W]</span>
<span class="t " style="font-size:12.5px;color:#000;left:946.5px;width:300px;text-align:center;top:181.68px;">[kg]</span>
<span class="t " style="font-size:12.5px;color:#000;left:698.5px;width:300px;text-align:right;top:202.68px;">Q1</span>
<span class="t " style="font-size:12.5px;color:#000;left:882.5px;width:300px;text-align:center;top:202.68px;">369.457</span>
<span class="t " style="font-size:12.5px;color:#000;left:946.5px;width:300px;text-align:center;top:202.68px;">12351</span>
<span class="t " style="font-size:12.5px;color:#000;left:698.5px;width:300px;text-align:right;top:222.68px;">Q2</span>
<span class="t " style="font-size:12.5px;color:#000;left:882.5px;width:300px;text-align:center;top:222.68px;">149.3133</span>
<span class="t " style="font-size:12.5px;color:#000;left:946.5px;width:300px;text-align:center;top:222.68px;">128</span>
<span class="t " style="font-size:12.5px;color:#000;left:698.5px;width:300px;text-align:right;top:242.68px;">Q3</span>
<span class="t " style="font-size:12.5px;color:#000;left:882.5px;width:300px;text-align:center;top:242.68px;">-122.169</span>
<span class="t " style="font-size:12.5px;color:#000;left:946.5px;width:300px;text-align:center;top:242.68px;">1545</span>
<span class="t " style="font-size:12.5px;color:#000;left:698.5px;width:300px;text-align:right;top:262.68px;">Q4</span>
<span class="t " style="font-size:12.5px;color:#000;left:882.5px;width:300px;text-align:center;top:262.68px;">296.5077</span>
<span class="t " style="font-size:12.5px;color:#000;left:946.5px;width:300px;text-align:center;top:262.68px;">3897</span>
<span class="t " style="font-size:12.5px;color:#000;left:698.5px;width:300px;text-align:right;top:282.68px;">Q5</span>
<span class="t " style="font-size:12.5px;color:#000;left:882.5px;width:300px;text-align:center;top:282.68px;">469.3493</span>
<span class="t " style="font-size:12.5px;color:#000;left:946.5px;width:300px;text-align:center;top:282.68px;">12259</span>
<span class="t " style="font-size:12.5px;color:#000;left:698.5px;width:300px;text-align:right;top:302.68px;">Q6</span>
<span class="t " style="font-size:12.5px;color:#000;left:882.5px;width:300px;text-align:center;top:302.68px;">286.6815</span>
<span class="t " style="font-size:12.5px;color:#000;left:946.5px;width:300px;text-align:center;top:302.68px;">192</span>
<span class="t " style="font-size:12.5px;color:#000;left:698.5px;width:300px;text-align:right;top:322.68px;">Q7</span>
<span class="t " style="font-size:12.5px;color:#000;left:882.5px;width:300px;text-align:center;top:322.68px;">122.1687</span>
<span class="t " style="font-size:12.5px;color:#000;left:946.5px;width:300px;text-align:center;top:322.68px;">1545</span>
<span class="t " style="font-size:12.5px;color:#000;left:698.5px;width:300px;text-align:right;top:342.68px;">Q8</span>
<span class="t " style="font-size:12.5px;color:#000;left:882.5px;width:300px;text-align:center;top:342.68px;">759.0598</span>
<span class="t " style="font-size:12.5px;color:#000;left:946.5px;width:300px;text-align:center;top:342.68px;">7794</span>
<span class="t " style="font-size:12.5px;color:#000;left:698.5px;width:300px;text-align:right;top:362.68px;">Q9</span>
<span class="t " style="font-size:12.5px;color:#000;left:882.5px;width:300px;text-align:center;top:362.68px;">327.7889</span>
<span class="t " style="font-size:12.5px;color:#000;left:946.5px;width:300px;text-align:center;top:362.68px;">10958</span>
<span class="t " style="font-size:12.5px;color:#000;left:698.5px;width:300px;text-align:right;top:382.68px;">Q10</span>
<span class="t " style="font-size:12.5px;color:#000;left:882.5px;width:300px;text-align:center;top:382.68px;">149.3133</span>
<span class="t " style="font-size:12.5px;color:#000;left:946.5px;width:300px;text-align:center;top:382.68px;">128</span>
<span class="t " style="font-size:12.5px;color:#000;left:698.5px;width:300px;text-align:right;top:402.68px;">Q11</span>
<span class="t " style="font-size:12.5px;color:#000;left:882.5px;width:300px;text-align:center;top:402.68px;">411.8746</span>
<span class="t " style="font-size:12.5px;color:#000;left:946.5px;width:300px;text-align:center;top:402.68px;">245</span>
<span class="t " style="font-size:12.5px;color:#000;left:698.5px;width:300px;text-align:right;top:422.68px;">Q12</span>
<span class="t " style="font-size:12.5px;color:#000;left:882.5px;width:300px;text-align:center;top:422.68px;">494.1796</span>
<span class="t " style="font-size:12.5px;color:#000;left:946.5px;width:300px;text-align:center;top:422.68px;">6495</span>
<span class="t " style="font-size:12.5px;color:#000;left:698.5px;width:300px;text-align:right;top:442.68px;">Sum</span>
<span class="t " style="font-size:12.5px;color:#FF0000;left:882.5px;width:300px;text-align:center;top:442.68px;">3713.525</span>
<span class="t " style="font-size:12.5px;color:#FF0000;left:946.5px;width:300px;text-align:center;top:442.68px;">57538</span>
<div style="left:40px;top:560px;width:1089px;height:1px;background:#000;"></div>
<div style="left:41px;top:601px;width:318px;height:118px;background:#fff;"></div>
<div style="left:297px;top:601px;width:62px;height:19px;background:#FFFF99;"></div>
<div style="left:297px;top:621px;width:62px;height:19px;background:#FFFF99;"></div>
<div style="left:297px;top:641px;width:62px;height:19px;background:#FFFF99;"></div>
<div style="left:39px;top:599px;width:322px;height:2px;background:#000;"></div>
<div style="left:39px;top:719px;width:322px;height:2px;background:#000;"></div>
<div style="left:39px;top:599px;width:2px;height:122px;background:#000;"></div>
<div style="left:359px;top:599px;width:2px;height:122px;background:#000;"></div>
<div style="left:232px;top:601px;width:1px;height:118px;background:#000;"></div>
<div style="left:296px;top:601px;width:1px;height:118px;background:#000;"></div>
<div style="left:41px;top:620px;width:318px;height:1px;background:#000;"></div>
<div style="left:41px;top:640px;width:318px;height:1px;background:#000;"></div>
<div style="left:41px;top:660px;width:318px;height:1px;background:#000;"></div>
<div style="left:41px;top:680px;width:318px;height:1px;background:#000;"></div>
<div style="left:41px;top:700px;width:318px;height:1px;background:#000;"></div>
<span class="t " style="font-size:12.5px;color:#000;letter-spacing:-0.036px;left:42.7px;top:581.67px;">Description</span>
<span class="t " style="font-size:12.5px;color:#000;left:114.5px;width:300px;text-align:center;top:581.67px;">Name</span>
<span class="t " style="font-size:12.5px;color:#000;letter-spacing:0.551px;left:179.0px;width:300px;text-align:center;top:581.67px;">Value</span>
<span class="t " style="font-size:12.5px;color:#000;letter-spacing:0.110px;left:43px;top:602.67px;">QH1 heating/cooling power</span>
<span class="t " style="font-size:12.5px;color:#000;left:114.5px;width:300px;text-align:center;top:602.67px;">QH1</span>
<span class="t " style="font-size:12.5px;color:#000;left:178.0px;width:300px;text-align:center;top:602.67px;">693.1093</span>
<span class="t " style="font-size:12.5px;color:#000;letter-spacing:0.110px;left:43px;top:622.67px;">QH2 heating/cooling power</span>
<span class="t " style="font-size:12.5px;color:#000;left:114.5px;width:300px;text-align:center;top:622.67px;">QH2</span>
<span class="t " style="font-size:12.5px;color:#000;left:178.0px;width:300px;text-align:center;top:622.67px;">1759.428</span>
<span class="t " style="font-size:12.5px;color:#000;letter-spacing:0.110px;left:43px;top:642.67px;">QH3 heating/cooling power</span>
<span class="t " style="font-size:12.5px;color:#000;left:114.5px;width:300px;text-align:center;top:642.67px;">QH3</span>
<span class="t " style="font-size:12.5px;color:#000;left:178.0px;width:300px;text-align:center;top:642.67px;">1260.988</span>
<span class="t " style="font-size:12.5px;color:#000;left:114.5px;width:300px;text-align:center;top:662.67px;">Sum</span>
<span class="t " style="font-size:12.5px;color:#FF0000;left:178.0px;width:300px;text-align:center;top:662.67px;">3713.525</span>
<div style="left:425px;top:601px;width:318px;height:118px;background:#fff;"></div>
<div style="left:681px;top:601px;width:62px;height:19px;background:#FFFF99;"></div>
<div style="left:681px;top:621px;width:62px;height:19px;background:#FFFF99;"></div>
<div style="left:681px;top:641px;width:62px;height:19px;background:#FFFF99;"></div>
<div style="left:423px;top:599px;width:322px;height:2px;background:#000;"></div>
<div style="left:423px;top:719px;width:322px;height:2px;background:#000;"></div>
<div style="left:423px;top:599px;width:2px;height:122px;background:#000;"></div>
<div style="left:743px;top:599px;width:2px;height:122px;background:#000;"></div>
<div style="left:616px;top:601px;width:1px;height:118px;background:#000;"></div>
<div style="left:680px;top:601px;width:1px;height:118px;background:#000;"></div>
<div style="left:425px;top:620px;width:318px;height:1px;background:#000;"></div>
<div style="left:425px;top:640px;width:318px;height:1px;background:#000;"></div>
<div style="left:425px;top:660px;width:318px;height:1px;background:#000;"></div>
<div style="left:425px;top:680px;width:318px;height:1px;background:#000;"></div>
<div style="left:425px;top:700px;width:318px;height:1px;background:#000;"></div>
<span class="t " style="font-size:12.5px;color:#000;letter-spacing:-0.036px;left:426.7px;top:581.67px;">Description</span>
<span class="t " style="font-size:12.5px;color:#000;left:498.5px;width:300px;text-align:center;top:581.67px;">Name</span>
<span class="t " style="font-size:12.5px;color:#000;letter-spacing:0.551px;left:563.0px;width:300px;text-align:center;top:581.67px;">Value</span>
<span class="t " style="font-size:12.5px;color:#000;letter-spacing:0.420px;left:426px;top:602.67px;">Temperature room 1</span>
<span class="t " style="font-size:12.5px;color:#000;left:498.5px;width:300px;text-align:center;top:602.67px;">T1</span>
<span class="t " style="font-size:12.5px;color:#000;left:562.0px;width:300px;text-align:center;top:602.67px;">15</span>
<span class="t " style="font-size:12.5px;color:#000;letter-spacing:0.420px;left:426px;top:622.67px;">Temperature room 2</span>
<span class="t " style="font-size:12.5px;color:#000;left:498.5px;width:300px;text-align:center;top:622.67px;">T2</span>
<span class="t " style="font-size:12.5px;color:#000;left:562.0px;width:300px;text-align:center;top:622.67px;">22</span>
<span class="t " style="font-size:12.5px;color:#000;letter-spacing:0.420px;left:426px;top:642.67px;">Temperature room 3</span>
<span class="t " style="font-size:12.5px;color:#000;left:498.5px;width:300px;text-align:center;top:642.67px;">T3</span>
<span class="t " style="font-size:12.5px;color:#000;left:562.0px;width:300px;text-align:center;top:642.67px;">15</span>
<span class="t " style="font-size:12.5px;color:#000;letter-spacing:0.046px;left:426px;top:662.67px;">Outside temperature</span>
<span class="t " style="font-size:12.5px;color:#000;left:498.5px;width:300px;text-align:center;top:662.67px;">T4</span>
<span class="t " style="font-size:12.5px;color:#000;left:562.0px;width:300px;text-align:center;top:662.67px;">-10</span>
<div style="left:809px;top:601px;width:318px;height:118px;background:#fff;"></div>
<div style="left:1065px;top:601px;width:62px;height:19px;background:#00FFFF;"></div>
<div style="left:1065px;top:621px;width:62px;height:19px;background:#CCFFCC;"></div>
<div style="left:1065px;top:641px;width:62px;height:19px;background:#CCFFCC;"></div>
<div style="left:807px;top:599px;width:322px;height:2px;background:#000;"></div>
<div style="left:807px;top:719px;width:322px;height:2px;background:#000;"></div>
<div style="left:807px;top:599px;width:2px;height:122px;background:#000;"></div>
<div style="left:1127px;top:599px;width:2px;height:122px;background:#000;"></div>
<div style="left:1000px;top:601px;width:1px;height:118px;background:#000;"></div>
<div style="left:1064px;top:601px;width:1px;height:118px;background:#000;"></div>
<div style="left:809px;top:620px;width:318px;height:1px;background:#000;"></div>
<div style="left:809px;top:640px;width:318px;height:1px;background:#000;"></div>
<div style="left:809px;top:660px;width:318px;height:1px;background:#000;"></div>
<div style="left:809px;top:680px;width:318px;height:1px;background:#000;"></div>
<div style="left:809px;top:700px;width:318px;height:1px;background:#000;"></div>
<span class="t " style="font-size:12.5px;color:#000;letter-spacing:-0.036px;left:810.7px;top:581.67px;">Description</span>
<span class="t " style="font-size:12.5px;color:#000;left:882.5px;width:300px;text-align:center;top:581.67px;">Name</span>
<span class="t " style="font-size:12.5px;color:#000;letter-spacing:0.551px;left:947.0px;width:300px;text-align:center;top:581.67px;">Value</span>
<span class="t " style="font-size:12.5px;color:#000;letter-spacing:-0.334px;left:811px;top:602.67px;">Q1+Q2+Q3+Q4-QH1=0</span>
<span class="t " style="font-size:12.5px;color:#000;left:882.5px;width:300px;text-align:center;top:602.67px;">Con1</span>
<span class="t " style="font-size:12.5px;color:#000;left:946.0px;width:300px;text-align:center;top:602.67px;">0</span>
<span class="t " style="font-size:12.5px;color:#000;letter-spacing:-0.257px;left:811px;top:622.67px;">Q5+Q6+Q7+Q8-Q3-QH2=0</span>
<span class="t " style="font-size:12.5px;color:#000;left:882.5px;width:300px;text-align:center;top:622.67px;">Con2</span>
<span class="t " style="font-size:12.5px;color:#000;left:946.0px;width:300px;text-align:center;top:622.67px;">0</span>
<span class="t " style="font-size:12.5px;color:#000;letter-spacing:-0.242px;left:811px;top:642.67px;">Q9+Q10+Q11+Q12-Q7-QH3=0</span>
<span class="t " style="font-size:12.5px;color:#000;left:882.5px;width:300px;text-align:center;top:642.67px;">Con3</span>
<span class="t " style="font-size:12.5px;color:#000;left:946.0px;width:300px;text-align:center;top:642.67px;">0</span>
<div style="left:297px;top:661px;width:0;height:0;border-top:5px solid #007A33;border-right:5px solid transparent;background:none"></div>
</body></html>
